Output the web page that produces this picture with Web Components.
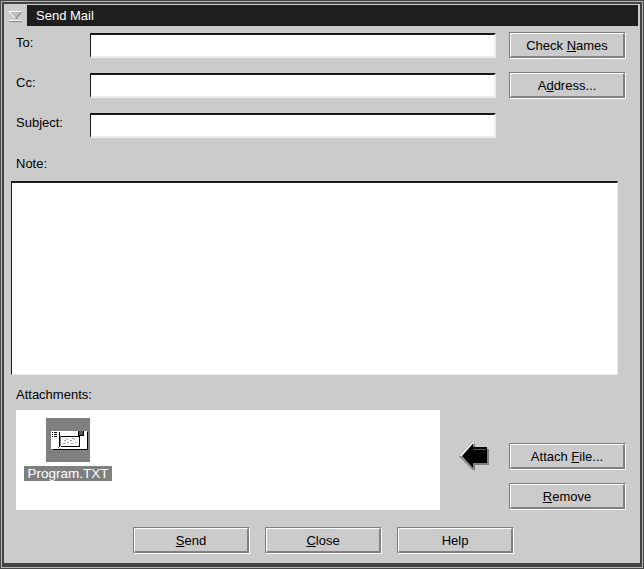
<!DOCTYPE html>
<html>
<head>
<meta charset="utf-8">
<title>Send Mail</title>
<style>
  html, body { margin: 0; padding: 0; background: #cbcbcb; }
  body { font: 13px/15px "Liberation Sans", Arial, sans-serif; color: #000; }
</style>
</head>
<body>
<mail-window>
  <title-bar slot="title">Send Mail</title-bar>

  <address-row label="To:"><win-button><span>Check <u>N</u>ames</span></win-button></address-row>
  <address-row label="Cc:"><win-button><span>A<u>d</u>dress...</span></win-button></address-row>
  <address-row label="Subject:"></address-row>

  <note-box>Note:</note-box>

  <attachment-panel>
    <attachment-item name="Program.TXT"></attachment-item>
    <win-button slot="actions"><span>Attach <u>F</u>ile...</span></win-button>
    <win-button slot="actions"><span><u>R</u>emove</span></win-button>
  </attachment-panel>

  <button-bar>
    <win-button><span><u>S</u>end</span></win-button>
    <win-button><span><u>C</u>lose</span></win-button>
    <win-button><span>Help</span></win-button>
  </button-bar>
</mail-window>

<script>
/**
 * Outer window with the dialog frame
 */
class MailWindow extends HTMLElement {
    constructor() {
        super();
        this.attachShadow({ mode: 'open' });
        this.shadowRoot.innerHTML = `
      <style>
        :host {
          display: block;
          box-sizing: border-box;
          width: 644px;
          height: 569px;
          background: #cbcbcb;
          border: 1px solid #4a4a4a;
          box-shadow: inset 0 0 0 1px #b4b4b4, inset 0 0 0 3px #444, inset 0 -5px 0 0 #444;
        }
        .inner {
          display: flex;
          flex-direction: column;
          padding: 4px 0 0 0;
        }
      </style>
      <div class="inner">
        <slot name="title"></slot>
        <slot></slot>
      </div>
    `;
    }
}

/**
 * Title strip, with the system menu box on the left
 */
class TitleBar extends HTMLElement {
    constructor() {
        super();
        this.attachShadow({ mode: 'open' });
        this.shadowRoot.innerHTML = `
      <style>
        :host {
          display: flex;
          height: 21px;
          margin: 0 5px 0 7px;
          gap: 1px;
        }
        .menu {
          width: 18px;
          height: 21px;
        }
        svg { display: block; }
        .text {
          flex: 1;
          background: #1e1e1e;
          color: #fff;
          line-height: 21px;
          padding-left: 9px;
        }
      </style>
      <div class="menu">
        <svg width="18" height="21" viewBox="0 0 18 21">
          <path d="M1 7h12l-6 7z" fill="#bdbdbd"/>
          <path d="M1 6.500h12.500M1 6.500l6.500 7.500" stroke="#fff" fill="none"/>
          <path d="M13.500 7l-6 7" stroke="#6e6e6e" fill="none"/>
          <path d="M1 15.500h13" stroke="#fff" shape-rendering="crispEdges"/>
          <path d="M1 16.500h13" stroke="#808080" shape-rendering="crispEdges"/>
        </svg>
      </div>
      <div class="text"><slot></slot></div>
    `;
    }
}

/**
 * Raised push button
 */
class WinButton extends HTMLElement {
    constructor() {
        super();
        this.attachShadow({ mode: 'open' });
        this.shadowRoot.innerHTML = `
      <style>
        :host {
          display: block;
          box-sizing: border-box;
          width: 117px;
          height: 27px;
          border: 1px solid;
          border-color: #808080 #fff #fff #808080;
        }
        .face {
          display: flex;
          align-items: center;
          justify-content: center;
          box-sizing: border-box;
          height: 100%;
          border-style: solid;
          border-width: 1px 2px 2px 1px;
          border-color: #fff #808080 #808080 #fff;
          background: #cbcbcb;
        }
      </style>
      <div class="face"><slot></slot></div>
    `;
    }
}

/**
 * One header line of the mail: label, text field and an optional button
 */
class AddressRow extends HTMLElement {
    constructor() {
        super();
        this.attachShadow({ mode: 'open' });
    }

    connectedCallback() {
        this.render();
    }

    render() {
        const label = this.getAttribute('label');
        this.shadowRoot.innerHTML = `
      <style>
        :host {
          display: grid;
          grid-template-columns: 61px 406px 117px;
          column-gap: 13px;
          height: 27px;
          margin-bottom: 13px;
          padding-left: 15px;
        }
        :host(:first-of-type) { margin-top: 6px; }
        .label { padding-top: 3px; }
        .field {
          box-sizing: border-box;
          height: 25px;
          margin-top: 1px;
          background: #fff;
          border-style: solid;
          border-width: 2px 2px 2px 1px;
          border-color: #1a1a1a #ececec #ececec #1a1a1a;
        }
      </style>
      <div class="label">${label}</div>
      <div class="field"></div>
      <slot></slot>
    `;
    }
}

/**
 * Note label with the big message area
 */
class NoteBox extends HTMLElement {
    constructor() {
        super();
        this.attachShadow({ mode: 'open' });
        this.shadowRoot.innerHTML = `
      <style>
        :host {
          display: block;
          margin-top: 4px;
        }
        .label {
          padding-left: 15px;
          height: 25px;
        }
        .area {
          box-sizing: border-box;
          width: 607px;
          height: 194px;
          margin-left: 10px;
          background: #fff;
          border-style: solid;
          border-width: 2px 1px 1px 1px;
          border-color: #1a1a1a #ececec #ececec #1a1a1a;
        }
      </style>
      <div class="label"><slot></slot></div>
      <div class="area"></div>
    `;
    }
}

/**
 * Attachments list, the arrow and its two buttons
 */
class AttachmentPanel extends HTMLElement {
    constructor() {
        super();
        this.attachShadow({ mode: 'open' });
        this.shadowRoot.innerHTML = `
      <style>
        :host {
          display: block;
          margin-top: 12px;
        }
        .label {
          padding-left: 15px;
          height: 23px;
        }
        .row {
          display: flex;
          padding-left: 15px;
        }
        .list {
          box-sizing: border-box;
          width: 424px;
          height: 100px;
          background: #fff;
          padding: 8px 0 0 8px;
        }
        .arrow {
          width: 69px;
          padding: 31px 0 0 19px;
          box-sizing: border-box;
        }
        svg { display: block; }
        .actions {
          display: flex;
          flex-direction: column;
          gap: 13px;
          padding-top: 33px;
        }
      </style>
      <div class="label">Attachments:</div>
      <div class="row">
        <div class="list"><slot></slot></div>
        <div class="arrow">
          <svg width="32" height="32" viewBox="0 0 32 32">
            <path d="M2 16 16 2v6h14v16H16v6z" fill="#808080"/>
            <path d="M0 15 14 0v6h14v16H14v7z" fill="#000"/>
            <path d="M0 15 14 0v2.500L3 15z" fill="#f4f4f4"/>
            <path d="M0 15 14 29v-2L3 15z" fill="#9a9a9a"/>
            <path d="M14 8h13v1H14z" fill="#555"/>
          </svg>
        </div>
        <div class="actions"><slot name="actions"></slot></div>
      </div>
    `;
    }
}

/**
 * Selected file icon with its name below
 */
class AttachmentItem extends HTMLElement {
    constructor() {
        super();
        this.attachShadow({ mode: 'open' });
    }

    connectedCallback() {
        this.render();
    }

    render() {
        const name = this.getAttribute('name');
        this.shadowRoot.innerHTML = `
      <style>
        :host {
          display: flex;
          flex-direction: column;
          align-items: center;
          width: 88px;
          gap: 4px;
        }
        .pic {
          width: 44px;
          height: 44px;
          background: repeating-conic-gradient(#7a7a7a 0 25%, #868686 0 50%) 0 0 / 2px 2px;
        }
        svg { display: block; }
        .name {
          background: #7f7f7f;
          color: #fff;
          width: 88px;
          height: 15px;
          line-height: 15px;
          font-size: 13.500px;
          text-align: center;
          white-space: nowrap;
        }
      </style>
      <div class="pic">
        <svg width="44" height="44" viewBox="0 0 44 44" shape-rendering="crispEdges">
          <path d="M41 14h1v18H7v-1h34z" fill="#000"/>
          <rect x="5" y="13" width="36" height="18" fill="#fff"/>
          <rect x="32" y="13" width="6" height="5" fill="#000"/>
          <rect x="33" y="13" width="4" height="4" fill="#555"/>
          <path d="M6 14h1v1H6zM8 14h3v1H8zM6 16h1v1H6zM8 16h3v1H8zM6 18h1v1H6zM8 18h3v1H8z" fill="#000"/>
          <rect x="13" y="14" width="1" height="15" fill="#000"/>
          <path d="M14 18h1v10h-1z" fill="#808080"/>
          <path d="M15 18h18M15 28h18" stroke="#000" fill="none"/>
          <path d="M33 18v11" stroke="#000"/>
          <path d="M18 22h2v1h-2zM21 21h1v1h-1zM24 22h2v1h-2zM28 21h1v1h-1zM17 25h3v1h-3zM21 24h2v1h-2zM25 25h2v1h-2zM29 24h1v1h-1zM19 20h1v1h-1zM26 20h2v1h-2z" fill="#a0a0a0"/>
          <path d="M12 29h1v1h-1zM14 30h1v1h-1z" fill="#808080"/>
        </svg>
      </div>
      <div class="name">${name}</div>
    `;
    }
}

/**
 * Bottom row of buttons
 */
class ButtonBar extends HTMLElement {
    constructor() {
        super();
        this.attachShadow({ mode: 'open' });
        this.shadowRoot.innerHTML = `
      <style>
        :host {
          display: flex;
          gap: 15px;
          margin-top: 17px;
          padding-left: 132px;
        }
      </style>
      <slot></slot>
    `;
    }
}

customElements.define('mail-window', MailWindow);
customElements.define('title-bar', TitleBar);
customElements.define('win-button', WinButton);
customElements.define('address-row', AddressRow);
customElements.define('note-box', NoteBox);
customElements.define('attachment-panel', AttachmentPanel);
customElements.define('attachment-item', AttachmentItem);
customElements.define('button-bar', ButtonBar);
</script>
</body>
</html>
